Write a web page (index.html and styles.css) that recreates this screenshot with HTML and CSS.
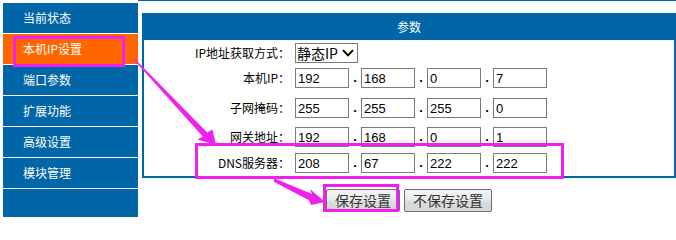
FILE: index.html
```html
<!DOCTYPE html>
<html lang="zh-CN">
<head>
<meta charset="utf-8">
<title>本机IP设置</title>
<link rel="stylesheet" href="styles.css">
</head>
<body>
<div class="page">
  <nav class="sidebar">
    <div class="nav-item">当前状态</div>
    <div class="nav-item active">本机IP设置</div>
    <div class="nav-item">端口参数</div>
    <div class="nav-item">扩展功能</div>
    <div class="nav-item">高级设置</div>
    <div class="nav-item">模块管理</div>
  </nav>
  <main class="main">
    <section class="panel">
      <div class="panel-head">参数</div>
      <div class="form">
        <div class="row">
          <span class="label">IP地址获取方式：</span>
          <div class="select"><span class="select-text">静态IP</span><svg class="chev" width="12" height="8" viewBox="0 0 12 8"><path d="M1 1.2 L6 6.4 L11 1.2" fill="none" stroke="#000" stroke-width="1.9"/></svg></div>
        </div>
        <div class="row gap-a">
          <span class="label">本机IP：</span>
          <div class="ip"><input class="octet" value="192"><span class="dot">.</span><input class="octet" value="168"><span class="dot">.</span><input class="octet" value="0"><span class="dot">.</span><input class="octet" value="7"></div>
        </div>
        <div class="row gap-b">
          <span class="label">子网掩码：</span>
          <div class="ip"><input class="octet" value="255"><span class="dot">.</span><input class="octet" value="255"><span class="dot">.</span><input class="octet" value="255"><span class="dot">.</span><input class="octet" value="0"></div>
        </div>
        <div class="row gap-c">
          <span class="label">网关地址：</span>
          <div class="ip"><input class="octet" value="192"><span class="dot">.</span><input class="octet" value="168"><span class="dot">.</span><input class="octet" value="0"><span class="dot">.</span><input class="octet" value="1"></div>
        </div>
        <div class="row gap-d">
          <span class="label">DNS服务器：</span>
          <div class="ip"><input class="octet" value="208"><span class="dot">.</span><input class="octet" value="67"><span class="dot">.</span><input class="octet" value="222"><span class="dot">.</span><input class="octet" value="222"></div>
        </div>
      </div>
    </section>
    <div class="actions">
      <button class="btn">保存设置</button>
      <button class="btn">不保存设置</button>
    </div>
  </main>
  <svg class="annot" width="676" height="217" viewBox="0 0 676 217">
    <g fill="none" stroke="#f020f0" stroke-width="3">
      <rect x="14.5" y="37.5" width="109" height="28"/>
      <rect x="196.5" y="144.5" width="366" height="33"/>
      <rect x="324.5" y="185.5" width="73" height="25"/>
    </g>
    <g fill="#f020f0">
      <polygon points="133.4,57.6 207.2,132.4 212.5,129.5 216,145 197.5,139.5 202.8,136.6 132.6,58.4"/>
      <polygon points="274.6,178.6 312,193.9 310,189 325,202 311,205 309,200.2 273.4,181.4"/>
    </g>
  </svg>
</div>
</body>
</html>
```
FILE: styles.css
```css
* { box-sizing: border-box; }
html, body { margin: 0; padding: 0; background: #fff; }
body {
  font-family: "Noto Sans CJK SC", "Liberation Sans", sans-serif;
  font-size: 12px;
  color: #000;
}
.page {
  position: relative;
  display: flex;
  width: 676px;
  height: 217px;
  overflow: hidden;
}
.sidebar {
  width: 135px;
  margin: 3px 0 0 3px;
  background: #0066a8;
  flex: none;
}
.nav-item {
  height: 31px;
  line-height: 30px;
  padding-left: 20px;
  border-bottom: 1px solid #fff;
  color: #fff;
  font-size: 12px;
}
.nav-item.active { background: #ff6600; }
.main {
  flex: 1;
  border-top: 1px solid #0066a8;
  padding-top: 12px;
}
.panel {
  margin-left: 4px;
  border: 2px solid #0066a8;
  border-top: 0;
}
.panel-head {
  height: 27px;
  line-height: 27px;
  background: #0066a8;
  color: #fff;
  text-align: center;
  font-size: 12px;
}
.form { padding: 3px 0 3px; }
.row {
  display: grid;
  grid-template-columns: 146px auto;
  column-gap: 5px;
  height: 20px;
  align-items: center;
}
.gap-a { margin-top: 5px; }
.gap-b { margin-top: 10px; }
.gap-c { margin-top: 9px; }
.gap-d { margin-top: 6px; }
.label {
  text-align: right;
  font-size: 12px;
  line-height: 20px;
  white-space: nowrap;
}
.select {
  width: 63px;
  height: 20px;
  border: 1px solid #7a7a7a;
  display: flex;
  align-items: center;
  justify-content: space-between;
  padding: 0 3px 0 1px;
  font-size: 14px;
  line-height: 18px;
}
.chev { display: block; }
.ip { display: flex; align-items: center; }
.octet {
  width: 54px;
  height: 20px;
  margin: 0;
  border: 1px solid #7a7a7a;
  padding: 0 2px;
  font-family: "Liberation Sans", sans-serif;
  font-size: 13px;
  color: #000;
  background: #fff;
  outline: none;
}
.dot {
  width: 12px;
  height: 20px;
  line-height: 20px;
  text-align: center;
  font-family: "Liberation Sans", sans-serif;
  font-size: 13px;
  font-weight: bold;
}
.actions {
  margin: 11px 0 0 4px;
  display: flex;
  justify-content: center;
  gap: 4px;
}
.btn {
  height: 23px;
  margin: 0;
  padding: 0 8px;
  border: 1px solid #707070;
  border-radius: 2px;
  background: linear-gradient(#f4f4f4, #e8e8e8 50%, #dcdcdc 51%, #d6d6d6);
  font-family: "Noto Sans CJK SC", sans-serif;
  font-size: 14px;
  line-height: 21px;
  color: #333;
}
.annot {
  position: absolute;
  left: 0;
  top: 0;
  pointer-events: none;
}
```
